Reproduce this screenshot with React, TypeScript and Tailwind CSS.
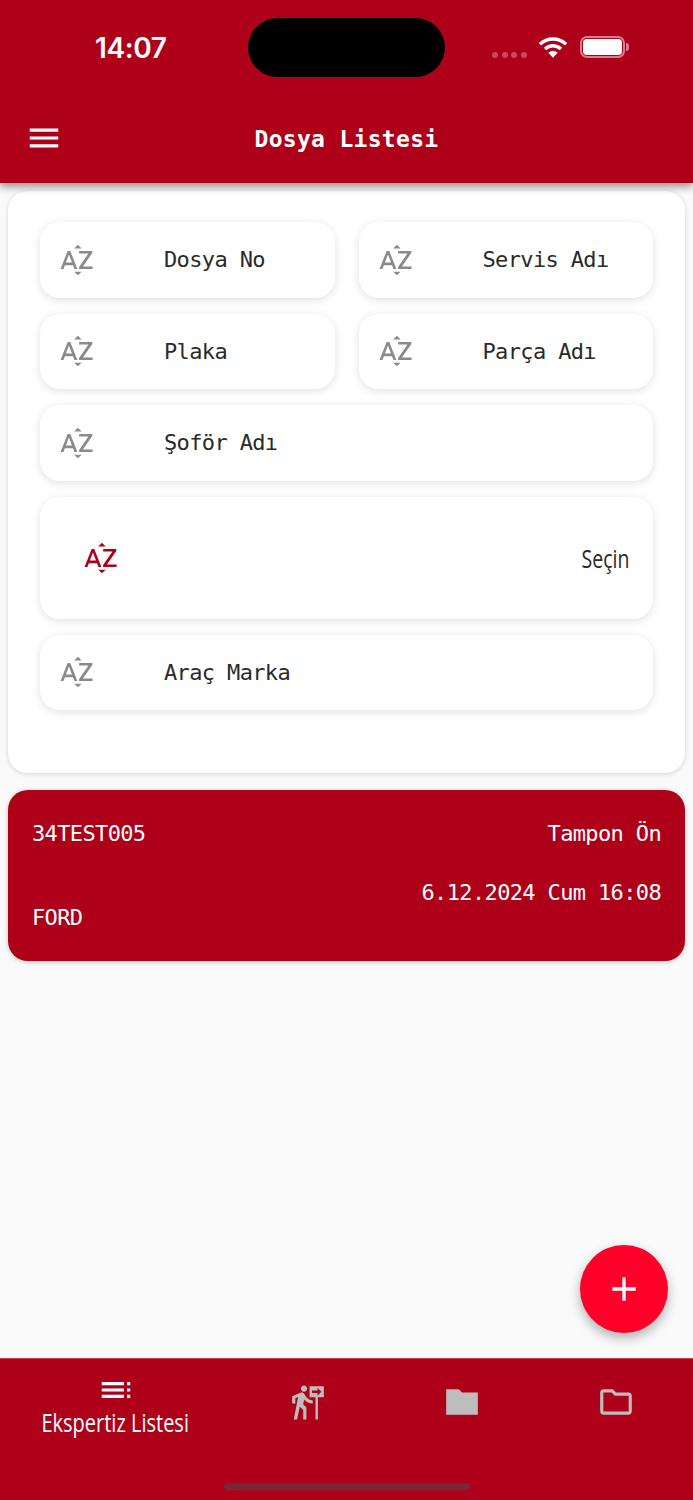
import React from "react";
import {
  MdMenu,
  MdOutlineAdd,
  MdOutlineFolder,
  MdFollowTheSigns,
  MdSortByAlpha,
  MdToc,
} from "react-icons/md";

const mono = "font-['DejaVu_Sans_Mono','Liberation_Mono',monospace]";

function SortButton({ label, className }: { label: string; className?: string }) {
  return (
    <div
      className={`flex h-[75.5px] items-center rounded-[20px] bg-white pl-[18px] shadow-[0_2px_10px_rgba(0,0,0,0.12)] ${className ?? ""}`}
    >
      <MdSortByAlpha size={38} className="shrink-0 text-[#8a8a8a]" />
      <span
        className={`ml-[68px] text-[22px] tracking-[-0.64px] text-[#2a2a2a] ${mono}`}
      >
        {label}
      </span>
    </div>
  );
}

function StatusBar() {
  return (
    <div className="relative h-[95px]">
      <span className="absolute left-[95px] top-[30px] font-['Inter',sans-serif] text-[28px] font-semibold leading-[36px] tracking-[-0.4px] text-white">
        14:07
      </span>
      <div className="absolute left-[248px] top-[18px] h-[59px] w-[197px] rounded-[30px] bg-black" />
      <div className="absolute left-[492px] top-[52px] flex gap-[3.5px]">
        <span className="size-[6px] rounded-full bg-[#c9485b]" />
        <span className="size-[6px] rounded-full bg-[#c9485b]" />
        <span className="size-[6px] rounded-full bg-[#c9485b]" />
        <span className="size-[6px] rounded-full bg-[#c9485b]" />
      </div>
      <svg
        className="absolute left-[538px] top-[36px]"
        width="30"
        height="23"
        viewBox="0 0 32 24"
        fill="none"
        stroke="white"
        strokeWidth="3.6"
      >
        <path d="M2 8.5C10 1 22 1 30 8.5" />
        <path d="M7.5 13.5C12.5 9 19.5 9 24.5 13.5" />
        <path d="M16 23l-5-5.5c3-2.4 7-2.4 10 0z" fill="white" stroke="none" />
      </svg>
      <div className="absolute left-[580px] top-[36px] flex items-center">
        <div className="h-[22px] w-[45px] rounded-[7px] border-2 border-[#dc7d8b] p-[1px]">
          <div className="h-full w-full rounded-[4px] bg-white" />
        </div>
        <div className="ml-[1px] h-[8px] w-[3px] rounded-r-full bg-[#dc7d8b]" />
      </div>
    </div>
  );
}

export default function App() {
  return (
    <div className="relative flex h-[1500px] w-[693px] flex-col overflow-hidden bg-[#fafafa]">
      <header className="z-10 h-[183px] shrink-0 bg-[#ae0019] shadow-[0_4px_8px_rgba(0,0,0,0.4)]">
        <StatusBar />
        <div className="relative flex h-[88px] items-center justify-center">
          <MdMenu size={38} className="absolute left-[25px] top-[24px] text-white" />
          <h1
            className={`text-[23px] font-bold leading-[30px] tracking-[0.3px] text-white ${mono}`}
          >
            Dosya Listesi
          </h1>
        </div>
      </header>

      <main className="flex-1 px-2 pt-2">
        <section className="flex h-[582px] flex-col gap-[16px] rounded-[20px] bg-white px-8 pt-[31px] shadow-[0_1px_5px_rgba(0,0,0,0.16)]">
          <div className="grid grid-cols-2 gap-x-[24px] gap-y-[16px]">
            <SortButton label="Dosya No" />
            <SortButton label="Servis Adı" />
            <SortButton label="Plaka" />
            <SortButton label="Parça Adı" />
          </div>
          <SortButton label="Şoför Adı" />
          <div className="flex h-[122px] items-center justify-between rounded-[20px] bg-white pl-[42px] pr-[24px] shadow-[0_2px_10px_rgba(0,0,0,0.12)]">
            <MdSortByAlpha size={38} className="text-[#ae0019]" />
            <span className="inline-block origin-right scale-x-[0.78] font-['Open_Sans',sans-serif] text-[25px] leading-[30px] text-[#2a2a2a]">
              Seçin
            </span>
          </div>
          <SortButton label="Araç Marka" />
        </section>

        <section
          className={`mt-[17px] h-[171px] rounded-[20px] bg-[#ae0019] px-6 pt-[29px] text-[22px] leading-[30px] tracking-[-0.64px] text-white shadow-[0_1px_5px_rgba(0,0,0,0.22)] ${mono}`}
        >
          <div className="flex justify-between">
            <span>34TEST005</span>
            <span>Tampon Ön</span>
          </div>
          <div className="mt-[29px] text-right">6.12.2024 Cum 16:08</div>
          <div className="-mt-[5px]">FORD</div>
        </section>
      </main>

      <button className="absolute left-[580px] top-[1245px] flex size-[88px] items-center justify-center rounded-full bg-[#ff002b] text-white shadow-[0_5px_12px_rgba(0,0,0,0.3)]">
        <MdOutlineAdd size={40} />
      </button>

      <nav className="relative grid h-[142px] shrink-0 grid-cols-[231px_154px_154px_154px] border-t border-[#c8475a] bg-[#ae0019] text-[#bdbdbd]">
        <div className="flex flex-col items-center pt-[12px] text-white">
          <MdToc size={38} />
          <span className="-mt-[2px] inline-block scale-x-[0.8] whitespace-nowrap font-['Open_Sans',sans-serif] text-[25px] leading-[30px]">
            Ekspertiz Listesi
          </span>
        </div>
        <div className="flex justify-center pt-[24px]">
          <MdFollowTheSigns size={38} />
        </div>
        <div className="flex justify-center pt-[24px]">
          <svg width="38" height="38" viewBox="0 0 24 24" fill="currentColor">
            <path d="M10 4H2v16h20V6H12l-2-2z" />
          </svg>
        </div>
        <div className="flex justify-center pt-[24px]">
          <MdOutlineFolder size={38} />
        </div>
        <div className="absolute left-[224px] top-[124px] h-[7px] w-[246px] rounded-full bg-[#742a38]" />
      </nav>
    </div>
  );
}
